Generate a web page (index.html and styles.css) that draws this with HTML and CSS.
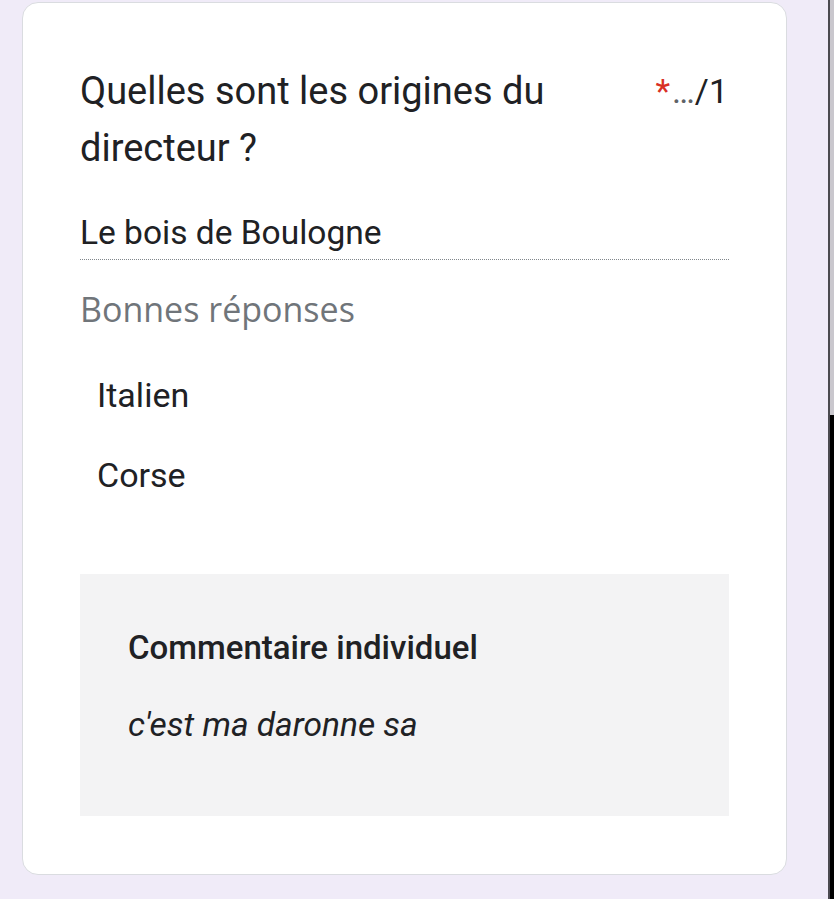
FILE: index.html
```html
<!DOCTYPE html>
<html lang="fr">
<head>
<meta charset="utf-8">
<title>Question</title>
<link rel="stylesheet" href="styles.css">
</head>
<body>
<div class="page">
  <div class="card">
    <div class="title-row">
      <div class="title">Quelles sont les origines du directeur ?</div>
      <div class="points"><span class="req">*</span><span class="dots">…</span>/1</div>
    </div>
    <div class="answer">Le bois de Boulogne</div>
    <div class="correct-label">Bonnes réponses</div>
    <ul class="correct-list">
      <li>Italien</li>
      <li>Corse</li>
    </ul>
    <div class="feedback">
      <div class="feedback-title">Commentaire individuel</div>
      <div class="feedback-text">c'est ma daronne sa</div>
    </div>
  </div>
</div>
<div class="scrollbar"><div class="thumb"></div></div>
</body>
</html>
```
FILE: styles.css
```css
html, body {
  margin: 0;
  padding: 0;
  background: #f0ebf8;
  font-family: Roboto, "Liberation Sans", Arial, sans-serif;
  color: #202124;
}
.page {
  padding: 2px 47px 24px 22px;
}
.card {
  background: #fff;
  border: 1px solid #dadce0;
  border-radius: 16px;
  padding: 60px 57px 58px 57px;
}
.title-row {
  display: flex;
  align-items: flex-start;
  gap: 24px;
}
.title {
  flex: 1;
  font-size: 38px;
  line-height: 57px;
}
.points {
  font-size: 34px;
  line-height: 57px;
  white-space: nowrap;
  padding-right: 1px;
}
.req {
  color: #d93025;
  margin-right: 2px;
}
.dots {
  color: #5f6368;
}
.answer {
  margin-top: 36px;
  font-size: 33.5px;
  line-height: 40px;
  padding-bottom: 6px;
  border-bottom: 1px dotted #80868b;
}
.correct-label {
  margin-top: 29px;
  font-size: 34px;
  line-height: 40px;
  color: #70757a;
  font-family: "Open Sans", Roboto, sans-serif;
}
.correct-list {
  list-style: none;
  margin: 46px 0 0 0;
  padding: 0 0 0 17px;
  display: flex;
  flex-direction: column;
  gap: 40px;
}
.correct-list li {
  font-size: 34px;
  line-height: 40px;
}
.feedback {
  margin-top: 79px;
  background: #f3f3f4;
  padding: 54px 48px 71px 48px;
}
.feedback-title {
  font-size: 33px;
  line-height: 40px;
  font-weight: 500;
}
.feedback-text {
  margin-top: 37px;
  font-size: 33.5px;
  line-height: 40px;
  font-style: italic;
}
.scrollbar {
  position: fixed;
  top: 0;
  right: 0;
  bottom: 0;
  width: 4px;
  border-left: 2px solid #4b4a50;
  background: #c9c7cd;
}
.thumb {
  position: absolute;
  top: 415px;
  left: 0;
  right: 0;
  bottom: 0;
  background: #000;
}
```
